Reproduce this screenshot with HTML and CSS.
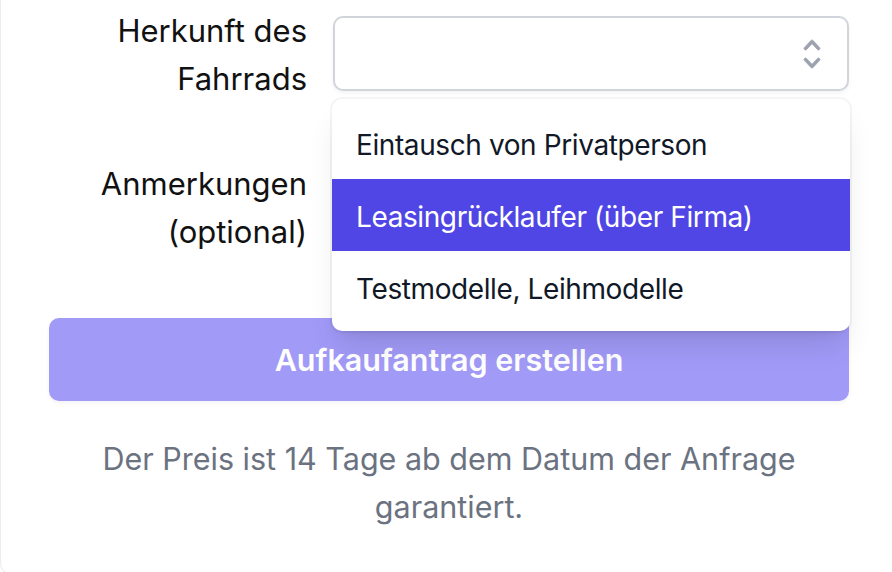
FILE: index.html
```html
<!DOCTYPE html>
<html lang="de">
<head>
    <meta charset="UTF-8">
    <meta name="viewport" content="width=device-width, initial-scale=1.0">
    <title>Aufkaufantrag</title>
    <link rel="stylesheet" href="styles.css">
</head>
<body>

    <div class="card">
        <form class="purchase-form">
            <div class="form-row">
                <label class="form-label" for="origin">Herkunft des Fahrrads</label>
                <div class="select-wrap">
                    <button type="button" class="select-button" id="origin">
                        <span class="select-value"></span>
                        <svg class="select-icon" viewBox="0 0 20 20" fill="currentColor" stroke="currentColor" stroke-width="0.35" stroke-linejoin="round" aria-hidden="true">
                            <path fill-rule="evenodd" d="M10 3a.75.75 0 01.55.24l3.25 3.5a.75.75 0 11-1.1 1.02L10 4.852 7.3 7.76a.75.75 0 01-1.1-1.02l3.25-3.5A.75.75 0 0110 3zm-3.76 9.2a.75.75 0 011.06.04l2.7 2.908 2.7-2.908a.75.75 0 111.1 1.02l-3.25 3.5a.75.75 0 01-1.1 0l-3.250-3.5a.75.75 0 01.04-1.06z" clip-rule="evenodd"/>
                        </svg>
                    </button>

                    <ul class="options">
                        <li class="option">Eintausch von Privatperson</li>
                        <li class="option active">Leasingrücklaufer (über Firma)</li>
                        <li class="option">Testmodelle, Leihmodelle</li>
                    </ul>
                </div>
            </div>

            <div class="form-row notes-row">
                <label class="form-label" for="notes">Anmerkungen (optional)</label>
                <textarea class="notes" id="notes" rows="3"></textarea>
            </div>

            <button type="submit" class="submit-button">Aufkaufantrag erstellen</button>

            <p class="hint">Der Preis ist 14 Tage ab dem Datum der Anfrage garantiert.</p>
        </form>
    </div>

</body>
</html>
```

FILE: styles.css
```css
/* General Styles */
* {
    margin: 0;
    padding: 0;
    box-sizing: border-box;
}

html, body {
    overflow: hidden;
}

body {
    font-family: Inter, "Noto Sans", sans-serif;
    background-color: #ffffff;
    color: #111111;
}

.card {
    width: 920px;
    height: 574px;
    padding: 7px 71px 0 48px;
    border: 1px solid #ececec;
    border-top: none;
    border-radius: 0 0 10px 10px;
    background-color: white;
}

.purchase-form {
    width: 800px;
}

/* Rows: label column + field column */
.form-row {
    display: grid;
    grid-template-columns: 258px 1fr;
    column-gap: 26px;
    align-items: start;
}

.form-label {
    text-align: right;
    font-size: 31px;
    line-height: 48px;
    color: #111111;
}

.notes-row {
    margin-top: 57px;
}

/* Select */
.select-wrap {
    position: relative;
    margin-top: 9px;
}

.select-button {
    display: flex;
    align-items: center;
    justify-content: space-between;
    width: 100%;
    height: 75px;
    padding: 0 15px 0 24px;
    background-color: white;
    border: 2px solid #d1d5db;
    border-radius: 10px;
    box-shadow: 0 2px 4px rgba(0, 0, 0, 0.05);
    font: inherit;
}

.select-icon {
    width: 40px;
    height: 40px;
    color: #9ca3af;
}

.options {
    position: absolute;
    top: calc(100% + 8px);
    left: -1px;
    right: -1px;
    z-index: 10;
    list-style: none;
    padding: 8px 0;
    background-color: white;
    border-radius: 10px;
    box-shadow: 0 20px 30px -6px rgba(0, 0, 0, 0.1),
                0 8px 12px -8px rgba(0, 0, 0, 0.1),
                0 0 0 2px rgba(0, 0, 0, 0.04);
}

.option {
    height: 72px;
    padding: 14px 24px 10px;
    font-size: 28px;
    letter-spacing: -0.4px;
    line-height: 48px;
    color: #111827;
}

.option.active {
    background-color: #4f46e5;
    color: white;
}

/* Notes */
.notes {
    margin-top: 9px;
    height: 120px;
    border: 2px solid #d1d5db;
    border-radius: 10px;
    resize: none;
}

/* Submit */
.submit-button {
    display: block;
    width: 100%;
    height: 83px;
    margin-top: 29px;
    background-color: #a19af7;
    color: white;
    border: none;
    border-radius: 10px;
    box-shadow: 0 2px 4px rgba(0, 0, 0, 0.05);
    font-family: inherit;
    font-size: 30.5px;
    font-weight: 600;
    cursor: pointer;
}

.hint {
    margin-top: 34px;
    text-align: center;
    font-size: 30.5px;
    line-height: 48px;
    color: #6b7280;
}
```
